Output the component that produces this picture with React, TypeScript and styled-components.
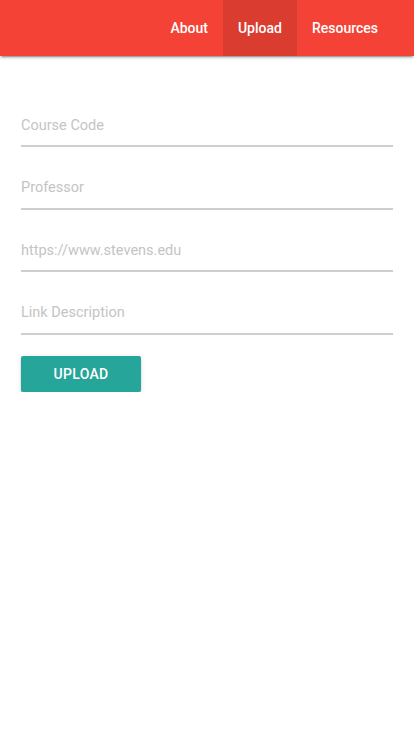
import React from "react";
import styled, { createGlobalStyle } from "styled-components";

const Global = createGlobalStyle`
  html, body { margin: 0; padding: 0; background: #fff; }
  body { font-family: Roboto, "Noto Sans", sans-serif; }
  * { box-sizing: border-box; }
`;

const Nav = styled.nav`
  height: 56px;
  background: #f44336;
  box-shadow: 0 2px 2px 0 rgba(0,0,0,0.14), 0 1px 5px 0 rgba(0,0,0,0.12), 0 3px 1px -2px rgba(0,0,0,0.2);
  display: flex;
  justify-content: flex-end;
  padding-right: 21px;
  position: relative;
  z-index: 1;
`;

const NavItem = styled.a<{ $active?: boolean }>`
  display: flex;
  align-items: center;
  padding: 0 15px;
  height: 56px;
  color: #fff;
  font-size: 14px;
  font-weight: 500;
  text-decoration: none;
  background: ${(p) => (p.$active ? "rgba(0,0,0,0.1)" : "transparent")};
`;

const Form = styled.form`
  margin: 0 21px;
  padding-top: 43px;
  display: flex;
  flex-direction: column;
`;

const Field = styled.input`
  height: 48px;
  margin: 0 0 14.5px;
  padding: 6px 0 0;
  border: none;
  border-bottom: 2px solid #cfcfcf;
  outline: none;
  font-family: Roboto, sans-serif;
  font-size: 14.5px;
  color: #333;
  background: transparent;
  &::placeholder { color: #c4c4c4; }
`;

const Button = styled.button`
  margin-top: 7px;
  width: 120px;
  height: 36px;
  border: none;
  border-radius: 2px;
  background: #26a69a;
  color: #fff;
  font-family: Roboto, sans-serif;
  font-size: 14px;
  font-weight: 500;
  letter-spacing: 0.3px;
  box-shadow: 0 2px 2px 0 rgba(0,0,0,0.14), 0 1px 5px 0 rgba(0,0,0,0.12), 0 3px 1px -2px rgba(0,0,0,0.2);
`;

export default function App() {
  return (
    <>
      <Global />
      <Nav>
        <NavItem>About</NavItem>
        <NavItem $active>Upload</NavItem>
        <NavItem>Resources</NavItem>
      </Nav>
      <Form onSubmit={(e) => e.preventDefault()}>
        <Field placeholder="Course Code" />
        <Field placeholder="Professor" />
        <Field placeholder="https://www.stevens.edu" />
        <Field placeholder="Link Description" />
        <div>
          <Button type="submit">UPLOAD</Button>
        </div>
      </Form>
    </>
  );
}
